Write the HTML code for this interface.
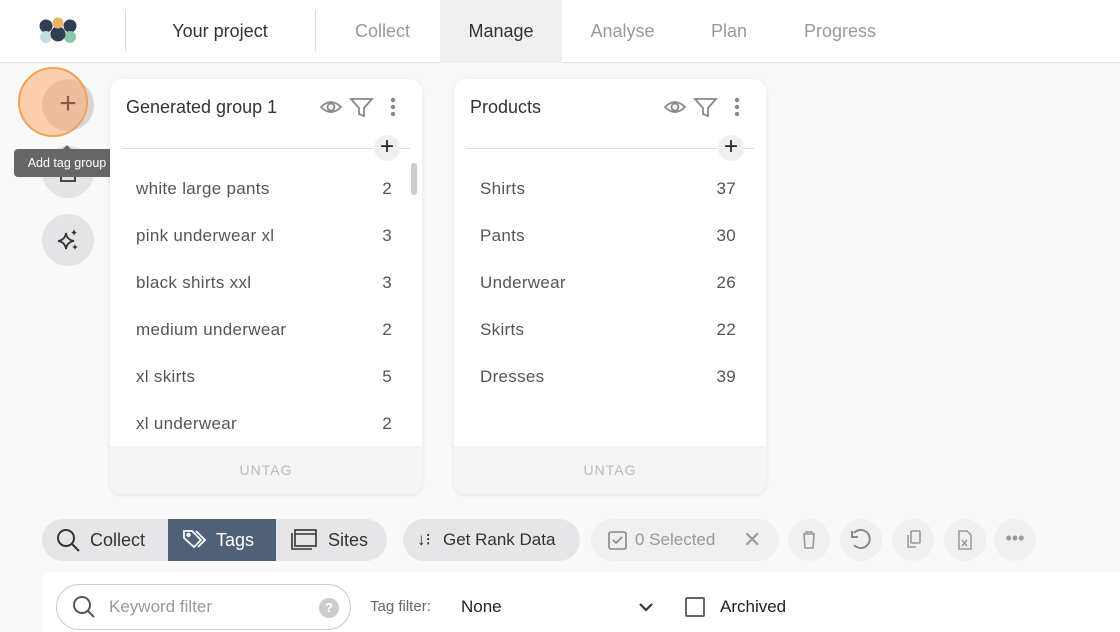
<!DOCTYPE html><html><head><style>
*{box-sizing:border-box;margin:0;padding:0}
body{width:1120px;height:626px;overflow:hidden;background:#f9f9f9;font-family:"Liberation Sans",sans-serif;position:relative;color:#333}
.top{position:absolute;left:0;top:0;width:1120px;height:63px;background:#fff;border-bottom:1px solid #e4e4e4}
.tab{position:absolute;top:0;height:63px;line-height:63px;font-size:18px;color:#999;text-align:center}
.sep{position:absolute;top:10px;width:1px;height:42px;background:#ddd}
.card{position:absolute;top:79px;width:312px;height:415px;background:#fff;border-radius:12px;box-shadow:0 1px 4px rgba(0,0,0,.1);overflow:hidden}
.card h3{position:absolute;left:16px;top:18px;font-size:18px;font-weight:normal;color:#333}
.line{position:absolute;left:12px;right:12px;top:69px;height:1px;background:#ddd}
.plus{position:absolute;right:22px;top:56px;width:26px;height:26px;border-radius:50%;background:#f0f0f0;font-size:24px;line-height:24px;text-align:center;color:#222}
.row{position:absolute;left:26px;right:30px;font-size:17px;color:#555;letter-spacing:.3px}
.row span{position:absolute;right:0}
.untag{position:absolute;left:0;right:0;bottom:0;height:48px;background:#f5f5f5;text-align:center;line-height:48px;font-size:14px;color:#bbb;letter-spacing:1px}
.side{position:absolute;left:42px;width:52px;height:52px;border-radius:50%;background:#e4e4e6}
.pill{position:absolute;top:519px;height:42px;border-radius:21px;background:#e6e6e8;font-size:18px;color:#333;line-height:42px}
.ib{position:absolute;top:519px;width:42px;height:42px;border-radius:50%;background:#f0f0f0}
</style></head><body>
<div class="top">
<svg style="position:absolute;left:39px;top:17px" width="38" height="27"><circle cx="7" cy="9" r="6.5" fill="#2f3e50"/><circle cx="31" cy="9" r="6.5" fill="#2f3e50"/><circle cx="7" cy="20" r="6" fill="#c7dfe0"/><circle cx="31" cy="20" r="6" fill="#8ac6a8"/><circle cx="19" cy="17" r="7.5" fill="#2f3e50"/><circle cx="19" cy="6" r="5.5" fill="#e9b565"/></svg>
<div class="sep" style="left:125px"></div>
<div class="tab" style="left:150px;width:140px;color:#333">Your project</div>
<div class="sep" style="left:315px"></div>
<div class="tab" style="left:330px;width:105px">Collect</div>
<div class="tab" style="left:440px;width:122px;background:#f0f0f0;color:#333">Manage</div>
<div class="tab" style="left:575px;width:95px">Analyse</div>
<div class="tab" style="left:690px;width:78px">Plan</div>
<div class="tab" style="left:785px;width:110px">Progress</div>
</div>

<div class="side" style="top:146px"></div>
<svg style="position:absolute;left:56px;top:160px" width="24" height="24" fill="none" stroke="#333" stroke-width="1.8"><path d="M5 9 V21 H19 V9 M9 13 L16 6 M11 6 H16 V11"/></svg>
<div class="side" style="top:214px"></div>
<svg style="position:absolute;left:56px;top:228px" width="24" height="24" fill="#333"><path d="M10 5 Q11 12 18 13 Q11 14 10 21 Q9 14 2 13 Q9 12 10 5Z" fill="none" stroke="#333" stroke-width="1.8"/><path d="M18 1 Q18.5 4 21 4.5 Q18.5 5 18 8 Q17.5 5 15 4.5 Q17.5 4 18 1Z"/><path d="M19 16 Q19.4 18.5 22 19 Q19.4 19.5 19 22 Q18.6 19.5 16 19 Q18.6 18.5 19 16Z"/></svg>
<div class="side" style="top:79px;left:42px;background:#d6d6d8"></div>
<div style="position:absolute;left:18px;top:67px;width:70px;height:70px;border-radius:50%;background:rgba(255,165,100,.5);border:2px solid #f5a055"></div>
<div style="position:absolute;left:42px;top:79px;width:52px;height:52px;text-align:center;line-height:50px;font-size:30px;color:#8a5a40">+</div>
<div style="position:absolute;left:61px;top:139px;width:0;height:0;border:6px solid transparent;border-bottom-color:#666"></div>
<div style="position:absolute;left:14px;top:149px;width:106px;height:28px;background:#666;border-radius:4px;color:#fff;font-size:12.5px;text-align:center;line-height:28px">Add tag group</div>

<div class="card" style="left:110px">
<h3>Generated group 1</h3>
<svg style="position:absolute;left:210px;top:18px" width="90" height="22" fill="none" stroke="#888" stroke-width="1.8"><path d="M1 10 Q11 0 21 10 Q11 20 1 10Z"/><circle cx="11" cy="10" r="3.5"/><path d="M31 2 H52 L44 11 V19 L39 17 V11Z"/><circle cx="73" cy="3" r="1.3" fill="#888"/><circle cx="73" cy="10" r="1.3" fill="#888"/><circle cx="73" cy="17" r="1.3" fill="#888"/></svg>
<div class="line"></div><div class="plus">+</div>
<div style="position:absolute;right:5px;top:84px;width:6px;height:32px;border-radius:3px;background:#ccc"></div>
<div class="row" style="top:100px">white large pants<span>2</span></div>
<div class="row" style="top:147px">pink underwear xl<span>3</span></div>
<div class="row" style="top:194px">black shirts xxl<span>3</span></div>
<div class="row" style="top:241px">medium underwear<span>2</span></div>
<div class="row" style="top:288px">xl skirts<span>5</span></div>
<div class="row" style="top:335px">xl underwear<span>2</span></div>
<div class="untag">UNTAG</div>
</div>
<div class="card" style="left:454px">
<h3>Products</h3>
<svg style="position:absolute;left:210px;top:18px" width="90" height="22" fill="none" stroke="#888" stroke-width="1.8"><path d="M1 10 Q11 0 21 10 Q11 20 1 10Z"/><circle cx="11" cy="10" r="3.5"/><path d="M31 2 H52 L44 11 V19 L39 17 V11Z"/><circle cx="73" cy="3" r="1.3" fill="#888"/><circle cx="73" cy="10" r="1.3" fill="#888"/><circle cx="73" cy="17" r="1.3" fill="#888"/></svg>
<div class="line"></div><div class="plus">+</div>
<div class="row" style="top:100px">Shirts<span>37</span></div>
<div class="row" style="top:147px">Pants<span>30</span></div>
<div class="row" style="top:194px">Underwear<span>26</span></div>
<div class="row" style="top:241px">Skirts<span>22</span></div>
<div class="row" style="top:288px">Dresses<span>39</span></div>
<div class="untag">UNTAG</div>
</div>

<div class="pill" style="left:42px;width:345px;overflow:hidden">
<svg style="position:absolute;left:14px;top:9px" width="26" height="26" fill="none" stroke="#333" stroke-width="2"><circle cx="10" cy="10" r="8"/><path d="M16 16 L23 23"/></svg>
<span style="position:absolute;left:48px">Collect</span>
<div style="position:absolute;left:126px;top:0;width:108px;height:42px;background:#4f6077;color:#fff"><svg style="position:absolute;left:14px;top:9px" width="26" height="24" fill="none" stroke="#fff" stroke-width="1.8"><path d="M2 3 H10 L19 12 L12 19 L2 10Z M14 3 L23 12 L16 19"/><circle cx="6.5" cy="7" r="1.3"/></svg><span style="position:absolute;left:48px">Tags</span></div>
<svg style="position:absolute;left:249px;top:9px" width="28" height="24" fill="none" stroke="#333" stroke-width="1.6"><rect x="4" y="2" width="21" height="16"/><path d="M4 6 H25 M1 5 V21 H21"/></svg>
<span style="position:absolute;left:286px">Sites</span>
</div>
<div class="pill" style="left:403px;width:177px"><span style="position:absolute;left:14px;font-size:17px">↓⁝</span><span style="position:absolute;left:40px;font-size:17px">Get Rank Data</span></div>
<div class="pill" style="left:591px;width:188px;background:#f0f0f0;color:#999;font-size:17px"><svg style="position:absolute;left:17px;top:12px" width="20" height="20" fill="none" stroke="#888" stroke-width="1.6"><rect x="1" y="1" width="17" height="17" rx="2"/><path d="M5 9 L8 12 L14 6"/></svg><span style="position:absolute;left:44px">0 Selected</span><span style="position:absolute;left:152px;font-size:22px">✕</span></div>
<div class="ib" style="left:788px"><svg width="42" height="42" fill="none" stroke="#999" stroke-width="1.6"><path d="M15 15 H27 M18 15 V13 H24 V15 M16 15 L17 29 H25 L26 15"/></svg></div>
<div class="ib" style="left:840px"><svg width="42" height="42" fill="none" stroke="#888" stroke-width="2"><path d="M14 14 A9 9 0 1 1 14 26"/><path d="M12 12 V18 H18"/></svg></div>
<div class="ib" style="left:892px"><svg width="42" height="42" fill="none" stroke="#999" stroke-width="1.6"><rect x="19" y="12" width="9" height="12" rx="1"/><path d="M16 16 V28 H24"/></svg></div>
<div class="ib" style="left:944px"><svg width="42" height="42" fill="none" stroke="#999" stroke-width="1.5"><path d="M15 12 H23 L27 16 V30 H15Z"/><path d="M18 21 L23 27 M23 21 L18 27"/></svg></div>
<div class="ib" style="left:994px;color:#999;text-align:center;line-height:38px;font-size:18px">•••</div>

<div style="position:absolute;left:42px;top:572px;width:1078px;height:60px;background:#fff;border-radius:10px 0 0 0"></div>
<div style="position:absolute;left:56px;top:584px;width:295px;height:46px;border:1px solid #ccc;border-radius:23px"></div>
<svg style="position:absolute;left:71px;top:594px" width="26" height="26" fill="none" stroke="#555" stroke-width="2"><circle cx="11" cy="11" r="8"/><path d="M17 17 L23 23"/></svg>
<div style="position:absolute;left:109px;top:597px;font-size:17px;color:#999">Keyword filter</div>
<div style="position:absolute;left:319px;top:598px;width:20px;height:20px;border-radius:50%;background:#ccc;color:#fff;font-size:13px;text-align:center;line-height:20px;font-weight:bold">?</div>
<div style="position:absolute;left:370px;top:598px;font-size:15px;color:#666">Tag filter:</div>
<div style="position:absolute;left:461px;top:597px;font-size:17px;color:#222">None</div>
<svg style="position:absolute;left:637px;top:600px" width="18" height="14" fill="none" stroke="#333" stroke-width="2.2"><path d="M3 4 L9 10 L15 4"/></svg>
<div style="position:absolute;left:685px;top:597px;width:20px;height:20px;border:2px solid #666;border-radius:2px"></div>
<div style="position:absolute;left:720px;top:597px;font-size:17px;color:#222">Archived</div>
</body></html>
